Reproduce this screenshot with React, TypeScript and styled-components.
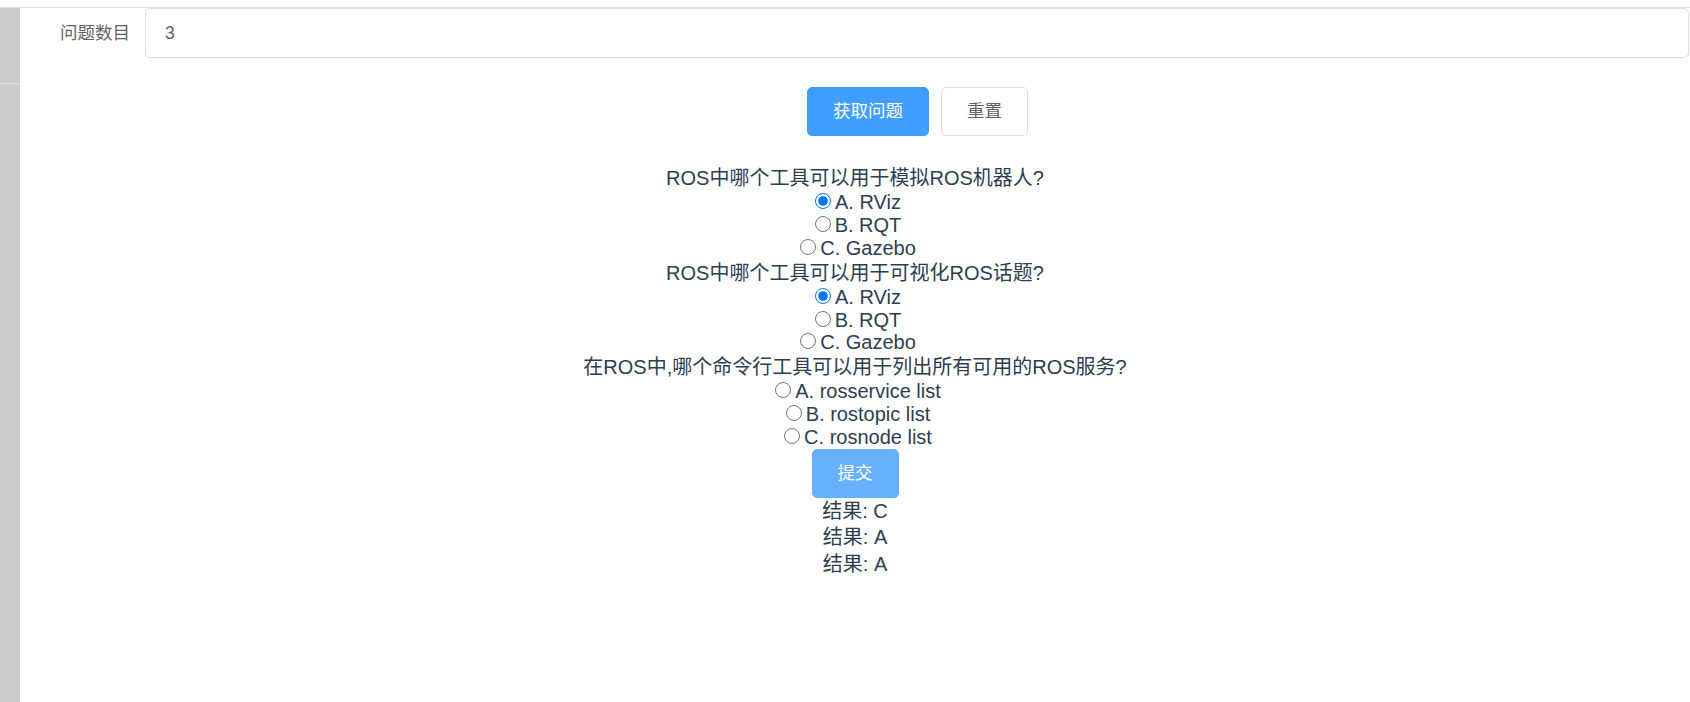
import React from "react";
import styled, { createGlobalStyle } from "styled-components";

const GlobalStyle = createGlobalStyle`
  html, body {
    margin: 0;
    padding: 0;
    background: #ffffff;
  }
  body {
    font-family: "Liberation Sans", Arial, "Noto Sans CJK SC", sans-serif;
  }
  * { box-sizing: border-box; }
`;

const Shell = styled.div`
  margin-top: 7px;
  border-top: 1px solid #dcdcdc;
  display: flex;
  height: calc(100vh - 7px);
`;

const Sidebar = styled.aside`
  width: 20px;
  flex-shrink: 0;
  background: #cccccc;
`;

const SidebarHead = styled.div`
  height: 76px;
  border-bottom: 1px solid #dedede;
`;

const Main = styled.main`
  flex: 1;
  min-width: 0;
  display: flex;
  flex-direction: column;
`;

const FormItem = styled.div`
  display: flex;
  margin-bottom: 29px;
`;

const Label = styled.label`
  width: 125px;
  flex-shrink: 0;
  padding-right: 15px;
  text-align: right;
  font-size: 17.5px;
  line-height: 50px;
  color: #606266;
  font-family: "Liberation Sans", "Noto Sans CJK SC", sans-serif;
`;

const Content = styled.div<{ $offset?: boolean }>`
  flex: 1;
  display: flex;
  margin-left: ${(p) => (p.$offset ? "125px" : "0")};
  justify-content: ${(p) => (p.$offset ? "center" : "flex-start")};
  gap: 12px;
`;

const TextInput = styled.input`
  flex: 1;
  height: 50px;
  margin-right: 1px;
  border: 1px solid #dcdfe6;
  border-radius: 5px;
  padding: 0 19px;
  font-size: 17.5px;
  color: #606266;
  font-family: "Liberation Sans", "Noto Sans CJK SC", sans-serif;
  outline: none;
  background: #fff;
`;

const Button = styled.button<{ $variant: "primary" | "plain" | "active" }>`
  height: 49px;
  padding: 0 25px;
  border-radius: 5px;
  font-size: 17.5px;
  font-family: "Liberation Sans", "Noto Sans CJK SC", sans-serif;
  line-height: 1;
  cursor: pointer;
  border: 1px solid
    ${(p) =>
      p.$variant === "primary" ? "#409eff" : p.$variant === "active" ? "#66b1ff" : "#dcdfe6"};
  background: ${(p) =>
    p.$variant === "primary" ? "#409eff" : p.$variant === "active" ? "#66b1ff" : "#ffffff"};
  color: ${(p) => (p.$variant === "plain" ? "#606266" : "#ffffff")};
`;

const Quiz = styled.section`
  text-align: center;
  color: #2c3e50;
  font-size: 20px;
  font-family: "Liberation Sans", Arial, "Noto Sans CJK SC", sans-serif;
`;

const Question = styled.div`
  line-height: 26px;
  height: 26px;
`;

const Option = styled.label`
  display: block;
  height: 22.9px;
  line-height: 22.9px;
`;

const Radio = styled.input`
  width: 16px;
  height: 16px;
  margin: 0 4px 0 6px;
`;

const SubmitRow = styled.div`
  display: flex;
  justify-content: center;
`;

const Result = styled.div`
  line-height: 26.4px;
`;

type Q = { text: string; options: string[]; picked: number | null };

const questions: Q[] = [
  {
    text: "ROS中哪个工具可以用于模拟ROS机器人?",
    options: ["A. RViz", "B. RQT", "C. Gazebo"],
    picked: 0,
  },
  {
    text: "ROS中哪个工具可以用于可视化ROS话题?",
    options: ["A. RViz", "B. RQT", "C. Gazebo"],
    picked: 0,
  },
  {
    text: "在ROS中,哪个命令行工具可以用于列出所有可用的ROS服务?",
    options: ["A. rosservice list", "B. rostopic list", "C. rosnode list"],
    picked: null,
  },
];

const results = ["C", "A", "A"];

export default function App() {
  return (
    <>
      <GlobalStyle />
      <Shell>
        <Sidebar>
          <SidebarHead />
        </Sidebar>
        <Main>
          <FormItem>
            <Label>问题数目</Label>
            <Content>
              <TextInput defaultValue="3" />
            </Content>
          </FormItem>
          <FormItem>
            <Content $offset>
              <Button $variant="primary">获取问题</Button>
              <Button $variant="plain">重置</Button>
            </Content>
          </FormItem>
          <Quiz>
            {questions.map((q, qi) => (
              <div key={qi}>
                <Question>{q.text}</Question>
                {q.options.map((o, oi) => (
                  <Option key={oi}>
                    <Radio
                      type="radio"
                      name={`q${qi}`}
                      defaultChecked={q.picked === oi}
                    />
                    {o}
                  </Option>
                ))}
              </div>
            ))}
            <SubmitRow>
              <Button $variant="active">提交</Button>
            </SubmitRow>
            {results.map((r, i) => (
              <Result key={i}>结果: {r}</Result>
            ))}
          </Quiz>
        </Main>
      </Shell>
    </>
  );
}
